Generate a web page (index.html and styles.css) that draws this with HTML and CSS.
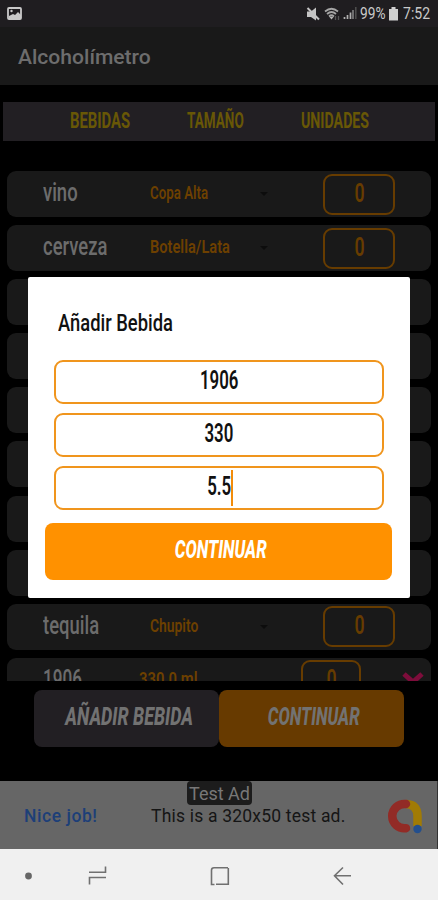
FILE: index.html
```html
<!DOCTYPE html>
<html lang="es">
<head>
    <meta charset="UTF-8">
    <meta name="viewport" content="width=device-width, initial-scale=1.0">
    <title>Alcoholímetro</title>
    <link rel="stylesheet" href="styles.css">
</head>
<body>
    <div class="status-bar">
        <svg class="icon-picture" width="15" height="13" viewBox="0 0 15 13">
            <rect x="1" y="1" width="13" height="11" rx="1" fill="none" stroke="#c9c9c9" stroke-width="1.8"/>
            <path d="M2 11V9l4-2 2 1 3-3 3 3v3z" fill="#c9c9c9"/>
            <circle cx="4.5" cy="4" r="1.2" fill="#c9c9c9"/>
        </svg>
        <div class="status-right">
            <svg width="14" height="14" viewBox="0 0 14 14">
                <path d="M1 4.500h4l5-4v13L5 10H1z" fill="#c4c4c4"/>
                <path d="M1.500 1l11.500 11.500" stroke="#c4c4c4" stroke-width="2"/>
            </svg>
            <svg class="icon-wifi" width="17" height="14" viewBox="0 0 17 14">
                <path d="M1 4.500Q7.500-1 14 4.500M3 7Q7.500 3 12 7M5 9.300Q7.500 7 10 9.300" fill="none" stroke="#a5a5a5" stroke-width="1.7"/>
                <path d="M5 9.500h5l-2.500 3z" fill="#b5b5b5"/>
                <path d="M11.500 9v4M14.500 9v4" stroke="#555" stroke-width="1.300"/>
            </svg>
            <svg class="icon-signal" width="14" height="13" viewBox="0 0 14 13">
                <path d="M1.500 10v2M4.500 8v4M7.500 5.500v6.500" stroke="#b0b0b0" stroke-width="1.700"/>
                <path d="M10 3v9" stroke="#888" stroke-width="1.500"/>
                <path d="M12.800 0v12" stroke="#505050" stroke-width="1.500"/>
            </svg>
            <span class="battery-text">99%</span>
            <svg class="icon-battery" width="9" height="14" viewBox="0 0 9 14">
                <path d="M0 2h2.500V0h4v2H9v11.500H0z" fill="#cfcfcf"/>
            </svg>
            <span class="clock">7:52</span>
        </div>
    </div>

    <div class="app-bar">Alcoholímetro</div>

    <div class="table-head">
        <div class="head-cell"><span class="narrow head-drink">BEBIDAS</span></div>
        <div class="head-cell"><span class="narrow head-size">TAMAÑO</span></div>
        <div class="head-cell"><span class="narrow">UNIDADES</span></div>
    </div>

    <div class="drinks">
        <div class="drink">
            <div class="name"><span class="narrow">vino</span></div>
            <div class="size"><span class="narrow">Copa Alta</span></div>
            <div class="caret"></div>
            <div class="qty"><span class="narrow">0</span></div>
        </div>
        <div class="drink">
            <div class="name"><span class="narrow">cerveza</span></div>
            <div class="size"><span class="narrow size-bottle">Botella/Lata</span></div>
            <div class="caret"></div>
            <div class="qty"><span class="narrow">0</span></div>
        </div>
        <div class="drink"></div>
        <div class="drink"></div>
        <div class="drink"></div>
        <div class="drink"></div>
        <div class="drink"></div>
        <div class="drink"></div>
        <div class="drink">
            <div class="name"><span class="narrow">tequila</span></div>
            <div class="size"><span class="narrow size-shot">Chupito</span></div>
            <div class="caret"></div>
            <div class="qty"><span class="narrow">0</span></div>
        </div>
        <div class="drink custom">
            <div class="name"><span class="narrow">1906</span></div>
            <div class="size"><span class="narrow">330.0 ml</span></div>
            <div class="qty"><span class="narrow">0</span></div>
            <svg class="remove" width="22" height="20" viewBox="0 0 22 20">
                <path d="M2 2l18 16M20 2L2 18" stroke="#7d0d3b" stroke-width="5"/>
            </svg>
        </div>
    </div>

    <div class="actions">
        <div class="btn btn-add"><span class="narrow">AÑADIR BEBIDA</span></div>
        <div class="btn btn-next"><span class="narrow">CONTINUAR</span></div>
    </div>

    <div class="ad">
        <span class="ad-title">Nice job!</span>
        <span class="ad-text">This is a 320x50 test ad.</span>
        <svg class="ad-logo" width="36" height="36" viewBox="0 0 36 36">
            <path d="M19 6Q30.500 6.500 30.500 18V28" fill="none" stroke="#a17b05" stroke-width="8.500"/>
            <path d="M19 6A12.200 12.200 0 1 0 19 30.200" fill="none" stroke="#922b26" stroke-width="8.500" stroke-linecap="round"/>
            <circle cx="30.500" cy="31" r="4.200" fill="#234f8d"/>
        </svg>
        <span class="ad-badge">Test Ad</span>
    </div>

    <div class="nav-bar">
        <svg width="438" height="51" viewBox="0 0 438 51" fill="none" stroke="#707070" stroke-width="1.600">
            <circle cx="28.500" cy="27" r="3.400" fill="#666" stroke="none"/>
            <path d="M89 23.300h16.500V17.500M106 28.500H89.500v7"/>
            <path d="M228 18.700H214q-2.500 0-2.500 2.500v14.300h3M228.300 19v16.300H216"/>
            <path d="M351 26.800H335M343 18.500l-8.500 8.300 8.500 8.700"/>
        </svg>
    </div>

    <div class="dialog">
        <h2><span class="narrow">Añadir Bebida</span></h2>
        <div class="field"><span class="narrow">1906</span></div>
        <div class="field"><span class="narrow">330</span></div>
        <div class="field"><span class="narrow">5.5</span><i class="cursor"></i></div>
        <div class="btn btn-confirm"><span class="narrow">CONTINUAR</span></div>
    </div>
</body>
</html>
```
FILE: styles.css
```css
* {
    box-sizing: border-box;
}
body {
    margin: 0;
    width: 438px;
    height: 900px;
    background-color: #000;
    font-family: Roboto, sans-serif;
    position: relative;
    overflow: hidden;
    white-space: nowrap;
}

/* squeezed lettering, used everywhere but the bars and the ad */
.narrow {
    display: inline-block;
    transform: scaleX(0.66);
    transform-origin: left center;
}

.status-bar {
    height: 27px;
    background-color: #1f1d20;
    display: flex;
    justify-content: space-between;
    align-items: center;
    padding: 0 8px 0 7px;
    color: #c9c9c9;
}
.status-right {
    display: flex;
    align-items: center;
    font-size: 16.5px;
}
.icon-wifi {
    margin-left: 4px;
}
.icon-signal {
    margin-left: 2px;
}
.battery-text {
    width: 26px;
    margin-left: 3px;
    transform: scaleX(0.83);
    transform-origin: left center;
}
.icon-battery {
    margin-left: 3px;
}
.clock {
    width: 27px;
    margin-left: 5px;
    transform: scaleX(0.85);
    transform-origin: left center;
}

.app-bar {
    height: 58px;
    background-color: #191919;
    color: #6d6d6d;
    font-size: 21.1px;
    font-weight: 500;
    line-height: 59px;
    padding-left: 18px;
}

.table-head {
    height: 39px;
    margin: 17px 3px 0;
    background-color: #221f23;
    display: grid;
    grid-template-columns: 67px 117px 114px 1fr;
    color: #685706;
    font-size: 21.5px;
    font-weight: 700;
    line-height: 37px;
}
.head-cell:first-child {
    grid-column: 2;
}
.head-drink {
    transform: scaleX(0.69);
}
.head-size {
    transform: scaleX(0.63);
}

.drinks {
    height: 510px;
    margin: 30px 7px 0;
    overflow: hidden;
    display: flex;
    flex-direction: column;
    gap: 8.1px;
}
.drink {
    flex: 0 0 46px;
    border-radius: 9px;
    background-color: #191919;
    display: flex;
    align-items: center;
    padding-left: 36px;
}
.name {
    width: 107px;
    height: 46px;
    color: #6c6c6c;
    font-size: 26px;
    font-weight: 500;
    line-height: 42px;
}
.name .narrow {
    transform: scaleX(0.71);
}
.size {
    width: 110px;
    padding-bottom: 3px;
    color: #6d4000;
    font-size: 19px;
    font-weight: 600;
}
.size .narrow {
    transform: scaleX(0.7);
}
.size .size-bottle {
    transform: scaleX(0.77);
}
.size .size-shot {
    transform: scaleX(0.73);
}
.caret {
    border: 4px solid transparent;
    border-top-color: #0c0c0c;
    border-bottom: 0;
    margin-right: 55px;
}
.qty {
    width: 72px;
    height: 41px;
    border: 2px solid #673c00;
    border-radius: 9px;
    color: #673c00;
    font-size: 26px;
    font-weight: 600;
    line-height: 34px;
    text-align: center;
}
.qty .narrow {
    transform: scaleX(0.68);
    transform-origin: center;
}
.custom .name {
    width: 96px;
}
.custom .size {
    width: 162px;
    padding-bottom: 4px;
}
.custom .name .narrow {
    transform: scaleX(0.66);
}
.custom .size .narrow {
    transform: scaleX(0.78);
}
.custom .qty {
    width: 60px;
}
.remove {
    margin: 2px 0 0 41px;
}

.actions {
    display: flex;
    padding: 9px 34px 0;
}
.btn {
    height: 57px;
    border-radius: 8px;
    display: flex;
    justify-content: center;
    padding-left: 5px;
    font-size: 25.5px;
    font-weight: 800;
    font-style: italic;
    line-height: 53px;
}
.btn .narrow {
    transform-origin: center;
}
.actions .btn {
    width: 185px;
    color: #727272;
}
.btn-add {
    background-color: #221f23;
}
.btn-add .narrow {
    transform: scaleX(0.7);
}
.actions .btn-next {
    background-color: #673a00;
}

.ad {
    height: 68px;
    margin-top: 34px;
    background-color: #666;
    border-right: 1px solid #333;
    position: relative;
    display: flex;
    align-items: center;
    padding: 2px 14px 0 24px;
    font-size: 17.5px;
}
.ad-title {
    width: 127px;
    color: #1d3f78;
    font-weight: 500;
    letter-spacing: 0.55px;
}
.ad-text {
    color: #151515;
    letter-spacing: 0.2px;
}
.ad-logo {
    margin-left: auto;
}
.ad-badge {
    position: absolute;
    left: 187px;
    top: 0;
    width: 65px;
    height: 24px;
    border-radius: 4px;
    background-color: #1c1c1c;
    color: #777;
    font-size: 18px;
    line-height: 25px;
    text-align: center;
}

.nav-bar {
    height: 51px;
    background-color: #f0f0f0;
}

.dialog {
    position: absolute;
    left: 28px;
    top: 277px;
    width: 382px;
    height: 321px;
    padding: 0 26px;
    background-color: #fff;
    border-radius: 2px;
    color: #111;
}
.dialog h2 {
    height: 83px;
    margin: 0;
    padding: 31px 0 0 4px;
    font-size: 24.5px;
    font-weight: 500;
    line-height: 30px;
}
.dialog h2 .narrow {
    transform: scaleX(0.75);
}
.field {
    width: 330px;
    height: 44px;
    margin-bottom: 9px;
    border: 2px solid #f0951d;
    border-radius: 9px;
    display: flex;
    justify-content: center;
    font-size: 25.5px;
    font-weight: 600;
    line-height: 37px;
    position: relative;
}
.field .narrow {
    transform-origin: center;
}
.cursor {
    position: absolute;
    left: 175px;
    top: 2px;
    width: 2px;
    height: 36px;
    background-color: #f28c0a;
}
.btn-confirm {
    width: 347px;
    margin: 13px 0 0 -9px;
    background-color: #ff9100;
    color: #fff;
}
```
